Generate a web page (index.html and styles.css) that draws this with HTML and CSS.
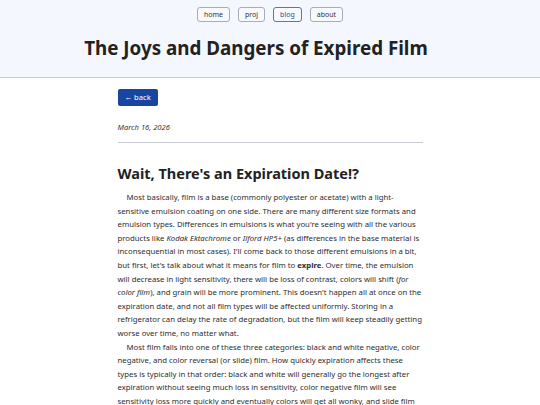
FILE: index.html
```html
<!DOCTYPE html>
<html lang="en">
<head>
<meta charset="utf-8">
<title>The Joys and Dangers of Expired Film</title>
<link rel="stylesheet" href="styles.css">
</head>
<body>
<header class="site-header">
  <nav class="nav">
    <a class="nav-btn" href="#">home</a>
    <a class="nav-btn" href="#">proj</a>
    <a class="nav-btn active" href="#">blog</a>
    <a class="nav-btn" href="#">about</a>
  </nav>
  <h1 class="title">The Joys and Dangers of Expired Film</h1>
</header>
<main class="content">
  <a class="back" href="#">← back</a>
  <p class="date">March 16, 2026</p>
  <hr class="rule">
  <h2 class="section">Wait, There's an Expiration Date!?</h2>
  <p class="para">Most basically, film is a base (commonly polyester or acetate) with a light-sensitive emulsion coating on one side. There are many different size formats and emulsion types. Differences in emulsions is what you're seeing with all the various products like <em>Kodak Ektachrome</em> or <em>Ilford HP5+</em> (as differences in the base material is inconsequential in most cases). I'll come back to those different emulsions in a bit, but first, let's talk about what it means for film to <strong>expire</strong>. Over time, the emulsion will decrease in light sensitivity, there will be loss of contrast, colors will shift (<em>for color film</em>), and grain will be more prominent. This doesn't happen all at once on the expiration date, and not all film types will be affected uniformly. Storing in a refrigerator can delay the rate of degradation, but the film will keep steadily getting worse over time, no matter what.</p>
  <p class="para">Most film falls into one of these three categories: black and white negative, color negative, and color reversal (or slide) film. How quickly expiration affects these types is typically in that order: black and white will generally go the longest after expiration without seeing much loss in sensitivity, color negative film will see sensitivity loss more quickly and eventually colors will get all wonky, and slide film will get hit the worst with the most noticable effects, often losing those rich black levels and color saturation pretty quickly. Slide film has a narrow exposure latitude and is more unforgiving, so any loss of quality will be much more noticeable in the final result.</p>
</main>
</body>
</html>
```

FILE: styles.css
```css
html, body {
  margin: 0;
  padding: 0;
}
body {
  font-family: "Noto Sans", "Open Sans", sans-serif;
  color: #222;
  background: #fff;
}
.site-header {
  background: #f5f7fe;
  border-bottom: 1px solid #c8ccd6;
  padding: 7px 0 0;
  height: 70px;
}
.nav {
  display: flex;
  justify-content: center;
  gap: 8px;
}
.nav-btn {
  display: block;
  font-size: 7px;
  line-height: 13px;
  padding: 0 6px;
  border: 1px solid #a9adb8;
  border-radius: 3px;
  color: #333;
  text-decoration: none;
  background: #f8f9fd;
}
.nav-btn.active {
  color: #2d4e9a;
  border-color: #5a74b4;
}
.title {
  margin: 12px 0 0;
  padding-right: 28px;
  text-align: center;
  font-size: 18.8px;
  line-height: 28px;
  font-weight: 700;
  color: #222;
}
.content {
  width: 305px;
  margin: 0 auto;
  padding-top: 11px;
  display: flex;
  flex-direction: column;
  align-items: stretch;
}
.back {
  align-self: flex-start;
  background: #1746a2;
  color: #fff;
  font-size: 7.6px;
  line-height: 17px;
  padding: 0 7px;
  border-radius: 2px;
  text-decoration: none;
}
.date {
  margin: 15px 0 0;
  font-size: 7.6px;
  line-height: 12px;
  font-style: italic;
  color: #333;
}
.rule {
  width: 100%;
  margin: 9px 0 0;
  border: 0;
  border-top: 1px solid #c9c9d3;
}
.section {
  margin: 20px 0 0;
  font-size: 14.5px;
  line-height: 20px;
  font-weight: 700;
  color: #222;
}
.para {
  margin: 0;
  font-size: 7.78px;
  line-height: 13.6px;
  text-indent: 9px;
  color: #2e2e2e;
}
.section + .para {
  margin-top: 8px;
}
```
